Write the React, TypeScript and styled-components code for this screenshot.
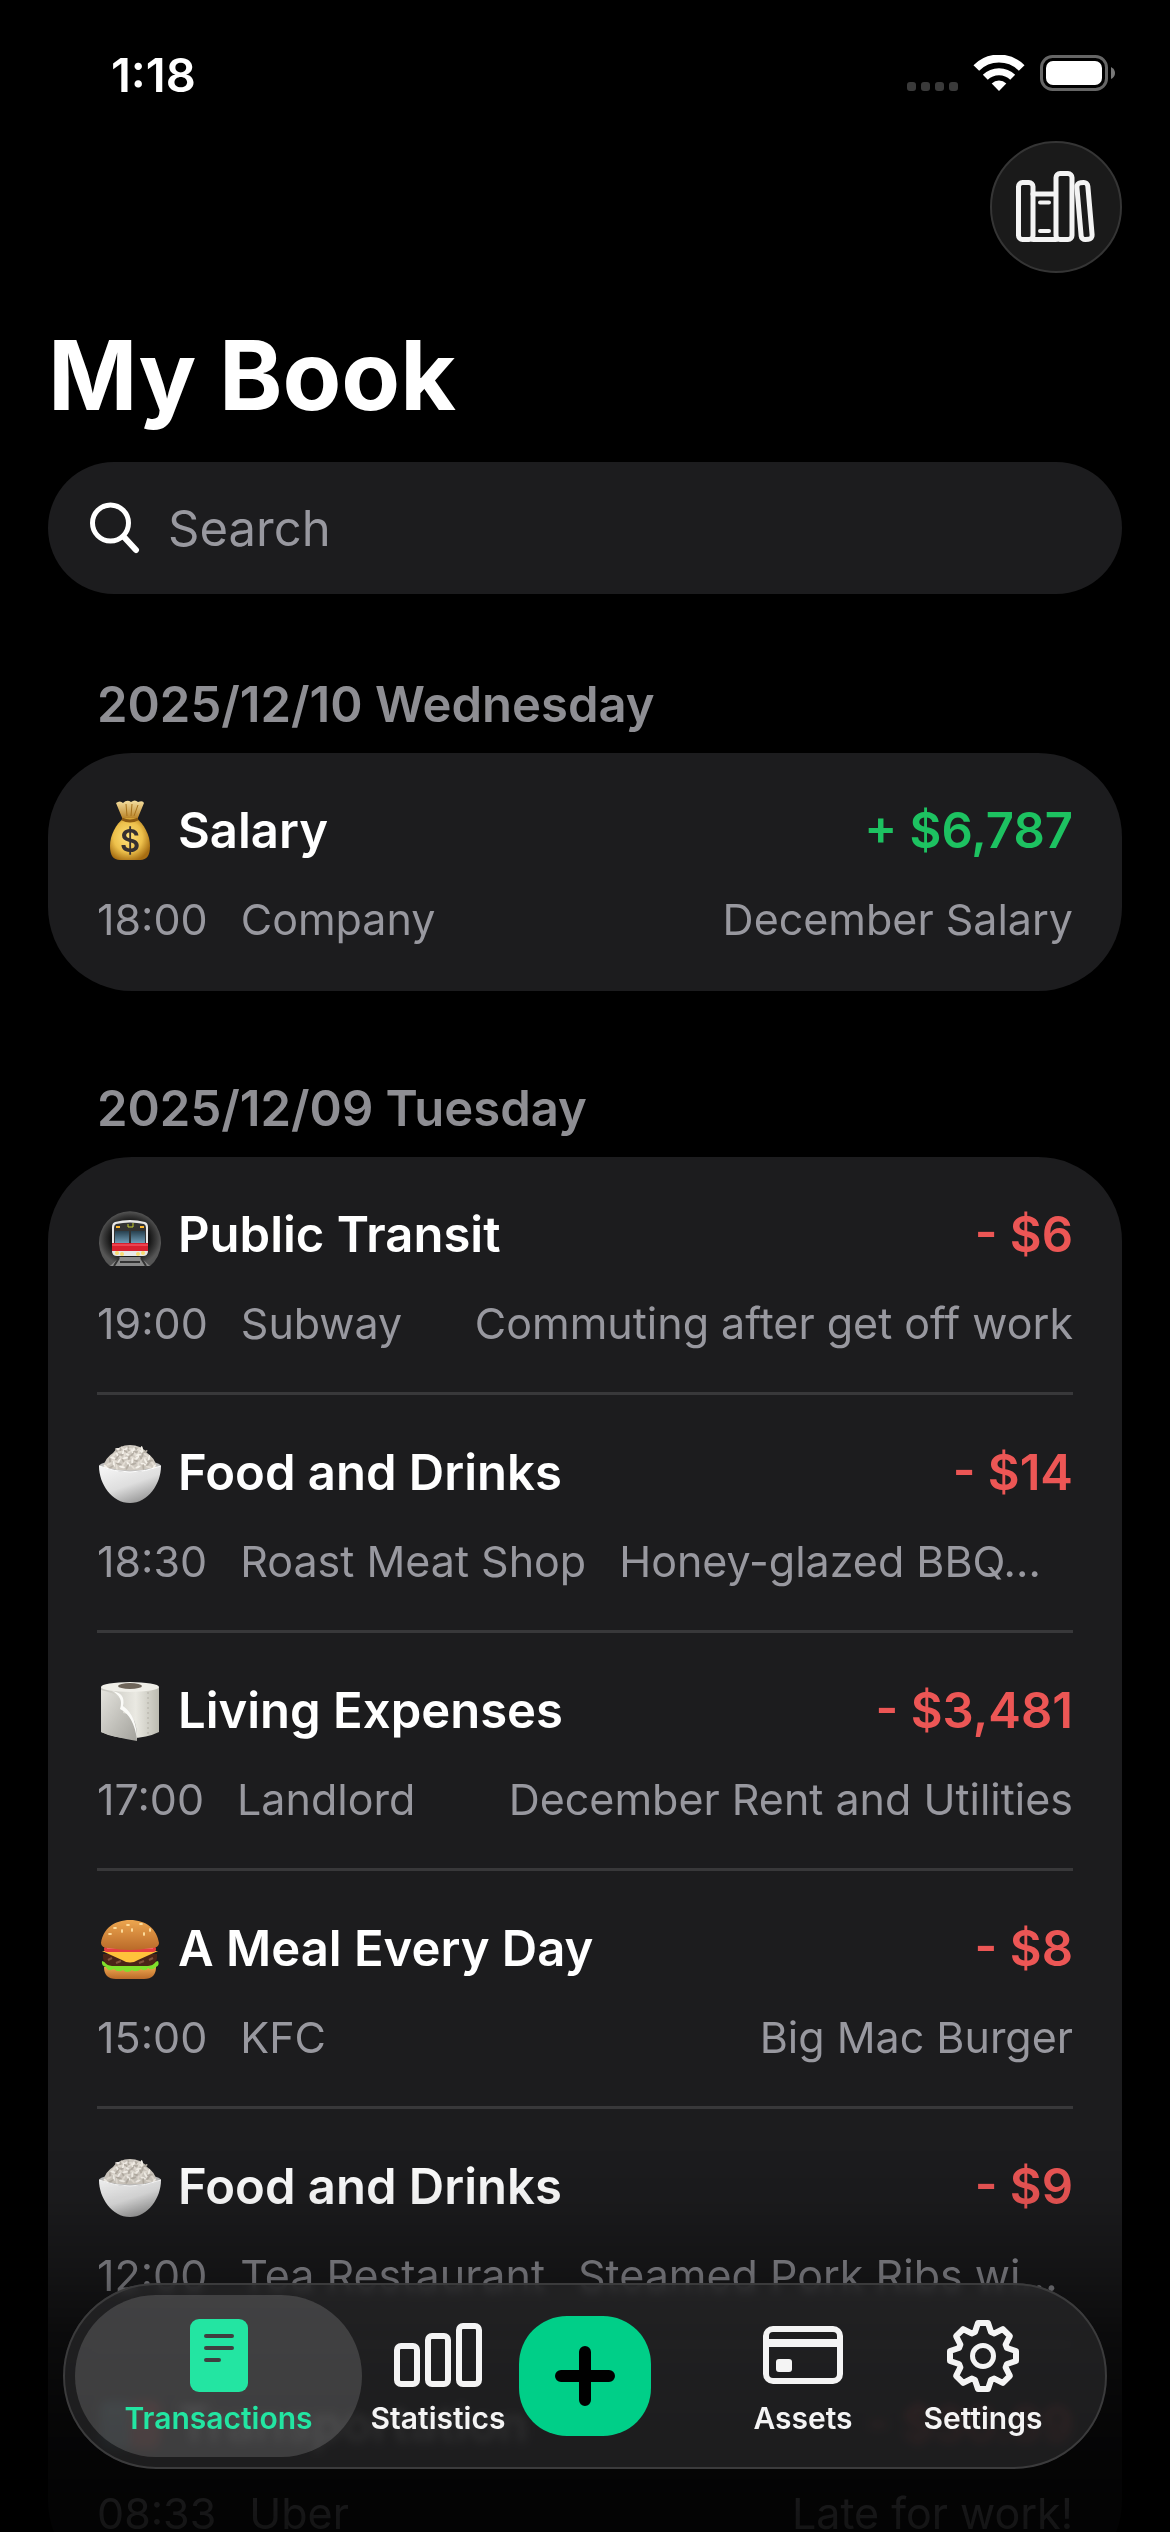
import styled, { createGlobalStyle } from "styled-components";
import { useState } from "react";

type Entry = {
  id: number;
  icon: string;
  title: string;
  amount: string;
  time: string;
  place: string;
  note: string;
  long?: boolean;
};

const days: Array<{ date: string; entries: Entry[] }> = [
  {
    date: "2025/12/10 Wednesday",
    entries: [
      {
        id: 1,
        icon: "money",
        title: "Salary",
        amount: "+ $6,787",
        time: "18:00",
        place: "Company",
        note: "December Salary",
      },
    ],
  },
  {
    date: "2025/12/09 Tuesday",
    entries: [
      {
        id: 2,
        icon: "metro",
        title: "Public Transit",
        amount: "- $6",
        time: "19:00",
        place: "Subway",
        note: "Commuting after get off work",
      },
      {
        id: 3,
        icon: "rice",
        title: "Food and Drinks",
        amount: "- $14",
        time: "18:30",
        place: "Roast Meat Shop",
        note: "Honey-glazed BBQ...",
        long: true,
      },
      {
        id: 4,
        icon: "roll",
        title: "Living Expenses",
        amount: "- $3,481",
        time: "17:00",
        place: "Landlord",
        note: "December Rent and Utilities",
      },
      {
        id: 5,
        icon: "burger",
        title: "A Meal Every Day",
        amount: "- $8",
        time: "15:00",
        place: "KFC",
        note: "Big Mac Burger",
      },
      {
        id: 6,
        icon: "rice",
        title: "Food and Drinks",
        amount: "- $9",
        time: "12:00",
        place: "Tea Restaurant",
        note: "Steamed Pork Ribs wi...",
        long: true,
      },
      {
        id: 7,
        icon: "taxi",
        title: "Transportation",
        amount: "- $30.89",
        time: "08:33",
        place: "Uber",
        note: "Late for work!",
      },
    ],
  },
];

// eight teeth around a hub
const gearPath = () => {
  const pts: string[] = [];
  for (let i = 0; i < 8; i++) {
    const a = (i * Math.PI) / 4;
    [
      [-8, -24],
      [-5, -33],
      [5, -33],
      [8, -24],
    ].forEach(([x, y]) => {
      const px = 37 + x * Math.cos(a) - y * Math.sin(a);
      const py = 37 + x * Math.sin(a) + y * Math.cos(a);
      pts.push(`${px.toFixed(1)} ${py.toFixed(1)}`);
    });
  }
  return `M${pts.join("L")}Z`;
};

const MoneyIcon = () => (
  <svg width="64" height="64" viewBox="0 0 64 64" aria-hidden="true">
    <defs>
      <radialGradient id="bag" cx="0.45" cy="0.45" r="0.6">
        <stop offset="0" stopColor="#ffe27a" />
        <stop offset="0.6" stopColor="#edc04b" />
        <stop offset="1" stopColor="#a66d12" />
      </radialGradient>
      <linearGradient id="neck" x1="0" x2="0" y1="0" y2="1">
        <stop offset="0" stopColor="#f5dfa0" />
        <stop offset="1" stopColor="#b57c1d" />
      </linearGradient>
    </defs>
    <path
      d="M18 4q4-3 7 0q4-4 8-1q4-3 7 0q5-2 6 1l-7 17H25Z"
      fill="url(#neck)"
    />
    <path d="M28 5l1 12M34 5l-1 12M40 6l-4 11" stroke="#a8731c" fill="none" />
    <path
      d="M26 19h12c8 6 14 17 14 28 0 9-3 14-10 14H22c-7 0-10-5-10-14 0-11 6-22 14-28Z"
      fill="url(#bag)"
    />
    <path d="M24 20q8 4 16 0" stroke="#8c5a12" strokeWidth="3" fill="none" />
    <text
      x="32"
      y="53"
      textAnchor="middle"
      fontFamily="Inter, sans-serif"
      fontSize="31"
      fontWeight="600"
      fill="#363031"
    >
      $
    </text>
  </svg>
);

const MetroIcon = () => (
  <svg width="64" height="64" viewBox="0 -4 64 64" aria-hidden="true">
    <defs>
      <radialGradient id="tunnel">
        <stop offset="0.5" stopColor="#000" />
        <stop offset="0.85" stopColor="#393939" />
        <stop offset="1" stopColor="#555" />
      </radialGradient>
      <linearGradient id="pane" x1="0" x2="0" y1="0" y2="1">
        <stop offset="0" stopColor="#27404f" />
        <stop offset="1" stopColor="#6f9cb6" />
      </linearGradient>
    </defs>
    <path d="M12 59a31 31 0 1 1 40 0Z" fill="url(#tunnel)" />
    <path d="M22 50h20l10 9H12Z" fill="#8b8b8b" />
    <path d="M21 51l-5 8M43 51l5 8M22 55h20" stroke="#333" strokeWidth="2" />
    <path
      d="M17 15q15-4 30 0q3 1 3 5v24q0 5-5 5H19q-5 0-5-5V20q0-4 3-5Z"
      fill="#e8e8e8"
    />
    <path d="M18 17q14-3 28 0q2 1 2 4v15H16V21q0-3 2-4Z" fill="#333" />
    <path d="M17 24h14v12H17ZM33 24h14v12H33Z" fill="url(#pane)" />
    <path d="M14 36h36v8H14Z" fill="#d8202e" />
    <path d="M14 38h36" stroke="#ff6670" />
    <path d="M18 20h4M42 20h4" stroke="#ffb82e" strokeWidth="2" />
    <path d="M30 17v3h5v-4" stroke="#c6ce2f" strokeWidth="1" fill="none" />
    <g fill="#f8dc72">
      <circle cx="19" cy="46" r="2" />
      <circle cx="24" cy="47" r="2" />
      <circle cx="40" cy="47" r="2" />
      <circle cx="45" cy="46" r="2" />
    </g>
  </svg>
);

const grains = Array.from({ length: 70 }, (_, i) => {
  const row = i % 7;
  const col = Math.floor(i / 7);
  const half = 12 + row * 2;
  const x = 32 - half + (col * half * 2) / 9 + (row % 2);
  return { x, y: 8 + row * 3, turn: (i * 67) % 180 };
});

const RiceIcon = () => (
  <svg width="64" height="64" viewBox="0 0 64 64" aria-hidden="true">
    <defs>
      <linearGradient id="bowl" x1="0.2" x2="0.8" y1="0" y2="1">
        <stop offset="0" stopColor="#f4f4f4" />
        <stop offset="0.5" stopColor="#dedede" />
        <stop offset="1" stopColor="#8c8c8c" />
      </linearGradient>
    </defs>
    <ellipse cx="32" cy="25" rx="31" ry="6" fill="#bdbdbd" />
    <path
      d="M5 26q3-10 10-14q6-8 17-8t17 8q7 4 10 14q-27 7-54 0Z"
      fill="#cfc9c0"
    />
    {grains.map((g, i) => (
      <ellipse
        key={i}
        cx={g.x}
        cy={g.y}
        rx="3"
        ry="1"
        fill={i % 3 === 0 ? "#f5f1ea" : i % 3 === 1 ? "#b5aea4" : "#e3ddd4"}
        transform={`rotate(${g.turn} ${g.x} ${g.y})`}
      />
    ))}
    <path
      d="M1 25q31 12 62 0c0 18-13 37-31 37S1 43 1 25Z"
      fill="url(#bowl)"
    />
    <path d="M1 25q31 12 62 0" stroke="#fff" strokeWidth="1" fill="none" />
  </svg>
);

const RollIcon = () => (
  <svg width="64" height="64" viewBox="0 0 64 64" aria-hidden="true">
    <defs>
      <linearGradient id="paper" x1="0" x2="1">
        <stop offset="0" stopColor="#c2c1ba" />
        <stop offset="0.6" stopColor="#eae9e2" />
        <stop offset="1" stopColor="#bcbbb1" />
      </linearGradient>
      <linearGradient id="sheet" x1="0" x2="1" y1="0" y2="1">
        <stop offset="0" stopColor="#e4e3dd" />
        <stop offset="1" stopColor="#a3a29c" />
      </linearGradient>
    </defs>
    <path d="M3 8v45q12 6 29 6t29-6V8Z" fill="url(#paper)" />
    <ellipse cx="32" cy="8" rx="29" ry="5" fill="#f0efe9" />
    <ellipse cx="32" cy="7" rx="12" ry="3" fill="#6e655a" />
    <path d="M3 11v42q12 5 36 9q1-27-14-28q4-18-22-23Z" fill="url(#sheet)" />
    <path
      d="M14 12q14 2 11 15q14 10 14 34q-3-24-17-31q4-12-8-18Z"
      fill="#fbfbf8"
    />
    <path d="M50 13v44" stroke="#b2b0a6" strokeDasharray="2 3" />
  </svg>
);

const BurgerIcon = () => (
  <svg width="64" height="64" viewBox="0 0 64 64" aria-hidden="true">
    <defs>
      <linearGradient id="bun" x1="0" x2="0" y1="0" y2="1">
        <stop offset="0" stopColor="#eda64f" />
        <stop offset="1" stopColor="#ba6a29" />
      </linearGradient>
    </defs>
    <path d="M6 50h52q0 12-12 12H18Q6 62 6 50Z" fill="url(#bun)" />
    <path
      d="M4 44q6 3 12 2h34q5 0 10-2q2 4-2 6q-4 4-8 1q-3 4-7 1q-5 4-9 1q-5 4-9 0q-5 3-9-1q-6 3-8-2q-5-1-4-6Z"
      fill="#7fe02b"
    />
    <path d="M5 37h54q1 11-9 12H14Q4 48 5 37Z" fill="#4a2417" />
    <path
      d="M10 43l4-2M18 46l5-2M41 46l5-2M51 43l4-2"
      stroke="#80503a"
      strokeWidth="2"
    />
    <path d="M4 34h56L40 43q-8 5-16 0Z" fill="#ffc23b" />
    <rect x="6" y="29" width="52" height="6" rx="3" fill="#e83d42" />
    <path d="M9 31h46" stroke="#ff8a85" />
    <path
      d="M3 26C5 12 16 3 32 3s27 9 29 23q0 5-8 5q-21 4-42 0q-8 0-8-5Z"
      fill="url(#bun)"
    />
    <g fill="#ffe2a3">
      <ellipse cx="17" cy="11" rx="2" ry="1" />
      <ellipse cx="30" cy="8" rx="2" ry="1" />
      <ellipse cx="43" cy="7" rx="2" ry="1" />
      <ellipse cx="24" cy="14" rx="1" ry="2" />
      <ellipse cx="34" cy="13" rx="1" ry="2" />
      <ellipse cx="46" cy="17" rx="1" ry="2" />
      <ellipse cx="52" cy="13" rx="1" ry="2" />
      <ellipse cx="12" cy="17" rx="2" ry="1" />
    </g>
  </svg>
);

const TaxiIcon = () => (
  <svg width="64" height="64" viewBox="0 0 64 64" aria-hidden="true">
    <rect x="2" y="8" width="34" height="48" rx="8" fill="#4b8293" />
    <rect x="32" y="8" width="30" height="48" rx="8" fill="#e53c35" />
  </svg>
);

const icons: Record<string, () => React.JSX.Element> = {
  money: MoneyIcon,
  metro: MetroIcon,
  rice: RiceIcon,
  roll: RollIcon,
  burger: BurgerIcon,
  taxi: TaxiIcon,
};

const BooksIcon = () => (
  <svg
    width="80"
    height="72"
    viewBox="0 0 80 72"
    fill="none"
    stroke="#f3f3f3"
    strokeWidth="5"
    strokeLinecap="round"
    aria-hidden="true"
  >
    <rect x="2.5" y="11.5" width="14.5" height="57" rx="4" />
    <path d="M17 23h22M17 68.5h23" />
    <path d="M24 31.5h9M24 60h9" strokeWidth="4" />
    <rect x="40" y="2.5" width="16" height="66" rx="4" />
    <rect
      x="63"
      y="11.5"
      width="11"
      height="57"
      rx="4"
      transform="rotate(-5 69 40)"
    />
  </svg>
);

const SearchIcon = () => (
  <svg
    width="50"
    height="52"
    viewBox="0 0 50 52"
    fill="none"
    stroke="#fff"
    strokeWidth="5"
    strokeLinecap="round"
    aria-hidden="true"
  >
    <circle cx="20.5" cy="21" r="18" />
    <path d="M34 35L46 48" strokeWidth="6" />
  </svg>
);

const StatusIcons = () => (
  <svg width="208" height="36" viewBox="0 0 208 36" aria-hidden="true">
    <g fill="#3a3a3a">
      <rect x="0" y="27" width="9" height="9" rx="3" />
      <rect x="14" y="27" width="9" height="9" rx="3" />
      <rect x="28" y="27" width="9" height="9" rx="3" />
      <rect x="42" y="27" width="9" height="9" rx="3" />
    </g>
    <g fill="none" stroke="#fff">
      <path d="M69.3 13a32 32 0 0 1 45.4 0" strokeWidth="8" />
      <path d="M78.3 22.3a19.5 19.5 0 0 1 27.4 0" strokeWidth="7" />
    </g>
    <path d="M92 36l-7.3-7.5a10.5 10.5 0 0 1 14.6 0Z" fill="#fff" />
    <rect
      x="134.5"
      y="1.5"
      width="65"
      height="33"
      rx="11"
      fill="none"
      stroke="#666"
      strokeWidth="3"
    />
    <rect x="139" y="6" width="56" height="24" rx="7" fill="#fff" />
    <path d="M204 12q4 2 4 6t-4 6Z" fill="#777" />
  </svg>
);

const NoteIcon = () => (
  <svg width="94" height="74" viewBox="0 0 94 74" aria-hidden="true">
    <rect x="18" y="0" width="58" height="73" rx="9" fill="#23e5a2" />
    <path
      d="M34 17h26M34 29h26M34 41h13"
      stroke="#3f3f3f"
      strokeWidth="4"
      strokeLinecap="round"
    />
  </svg>
);

const ChartIcon = () => (
  <svg
    width="94"
    height="74"
    viewBox="0 0 94 74"
    fill="none"
    stroke="#f4f4f4"
    strokeWidth="6"
    aria-hidden="true"
  >
    <rect x="6" y="27" width="20" height="38" rx="4" />
    <rect x="37" y="17" width="20" height="48" rx="4" />
    <rect x="68" y="7" width="20" height="58" rx="4" />
  </svg>
);

const CardIcon = () => (
  <svg
    width="94"
    height="74"
    viewBox="0 0 94 74"
    fill="none"
    stroke="#f4f4f4"
    strokeWidth="6"
    aria-hidden="true"
  >
    <rect x="10" y="10" width="74" height="52" rx="7" />
    <path d="M9 24h76" strokeWidth="8" />
    <rect
      x="20"
      y="40"
      width="16"
      height="13"
      rx="3"
      fill="#f4f4f4"
      stroke="none"
    />
  </svg>
);

const GearIcon = () => (
  <svg
    width="74"
    height="74"
    viewBox="0 0 74 74"
    fill="none"
    stroke="#f4f4f4"
    strokeWidth="5"
    strokeLinejoin="round"
    aria-hidden="true"
  >
    <path d={gearPath()} strokeWidth="6" />
    <circle cx="37" cy="37" r="10.5" />
  </svg>
);

const App = () => {
  const [tab, setTab] = useState("Transactions");

  return (
    <Screen>
      <GlobalStyle />
      <StatusBar>
        <Clock>1:18</Clock>
        <StatusIcons />
      </StatusBar>
      <Toolbar>
        <RoundButton type="button" aria-label="Books">
          <BooksIcon />
        </RoundButton>
      </Toolbar>
      <Heading>My Book</Heading>
      <SearchBox>
        <SearchIcon />
        <SearchInput type="search" placeholder="Search" aria-label="Search" />
      </SearchBox>
      <Feed>
        {days.map((day) => (
          <Day key={day.date}>
            <DayTitle>{day.date}</DayTitle>
            <Card>
              {day.entries.map((el) => {
                const Icon = icons[el.icon];
                return (
                  <Row key={el.id}>
                    <Line>
                      <Icon />
                      <Title>{el.title}</Title>
                      <Amount $income={el.amount.startsWith("+")}>
                        {el.amount}
                      </Amount>
                    </Line>
                    <Details>
                      <span>{el.time}</span>
                      <span>{el.place}</span>
                      <Note $long={el.long}>{el.note}</Note>
                    </Details>
                  </Row>
                );
              })}
            </Card>
          </Day>
        ))}
      </Feed>
      <Fade />
      <TabBar>
        <Tab
          type="button"
          $active={tab === "Transactions"}
          onClick={() => setTab("Transactions")}
        >
          <NoteIcon />
          Transactions
        </Tab>
        <Tab
          type="button"
          $active={tab === "Statistics"}
          onClick={() => setTab("Statistics")}
        >
          <ChartIcon />
          Statistics
        </Tab>
        <AddButton type="button" aria-label="Add">
          <svg width="60" height="60" viewBox="0 0 60 60" aria-hidden="true">
            <path
              d="M30 6v48M6 30h48"
              stroke="#000"
              strokeWidth="12"
              strokeLinecap="round"
            />
          </svg>
        </AddButton>
        <span />
        <Tab
          type="button"
          $active={tab === "Assets"}
          onClick={() => setTab("Assets")}
        >
          <CardIcon />
          Assets
        </Tab>
        <Tab
          type="button"
          $active={tab === "Settings"}
          onClick={() => setTab("Settings")}
        >
          <GearIcon />
          Settings
        </Tab>
      </TabBar>
    </Screen>
  );
};

export default App;

const GlobalStyle = createGlobalStyle`
  * {
    box-sizing: border-box;
  }

  body {
    margin: 0;
    background: #000;
    color: #fff;
    font-family: Inter, "Liberation Sans", sans-serif;
  }

  button, input {
    font: inherit;
    border: none;
  }
`;

const Screen = styled.main`
  height: 100vh;
  padding: 0 48px;
  overflow: hidden;
`;

const StatusBar = styled.div`
  height: 141px;
  padding: 45px 7px 0 63px;
  display: flex;
  justify-content: space-between;
  align-items: flex-start;

  svg {
    margin-top: 10px;
  }
`;

const Clock = styled.div`
  font-size: 47px;
  line-height: 60px;
  font-weight: 600;
`;

const Toolbar = styled.div`
  display: flex;
  justify-content: flex-end;
`;

const RoundButton = styled.button`
  width: 132px;
  height: 132px;
  padding: 0;
  border: 2px solid #353535;
  border-radius: 50%;
  background: #1a1a1a;
  display: flex;
  justify-content: center;
  align-items: center;
`;

const Heading = styled.h1`
  margin: 42px 0 27px;
  font-size: 96px;
  line-height: 120px;
  font-weight: 700;
`;

const SearchBox = styled.div`
  height: 132px;
  padding: 0 42px;
  border-radius: 66px;
  background: #1c1c1e;
  display: flex;
  align-items: center;
  gap: 28px;
`;

const SearchInput = styled.input`
  flex: 1;
  min-width: 0;
  padding: 2px 0 0;
  background: none;
  color: #fff;
  font-size: 49px;
  line-height: 60px;
  outline: none;

  &::placeholder {
    color: #98989f;
    opacity: 1;
  }
`;

const Feed = styled.div`
  display: flex;
  flex-direction: column;
  gap: 7px;
`;

const Day = styled.section`
  padding-top: 81px;
`;

const DayTitle = styled.h2`
  margin: 0 0 18px;
  padding: 0 49px;
  color: #8e8e93;
  font-size: 49px;
  line-height: 60px;
  font-weight: 600;
`;

const Card = styled.ul`
  margin: 0;
  padding: 0 49px;
  list-style: none;
  border-radius: 84px;
  background: #1c1c1e;
`;

const Row = styled.li`
  padding: 48px 0 42px;
  border-bottom: 3px solid #38383a;

  &:last-child {
    border-color: transparent;
  }
`;

const Line = styled.div`
  height: 60px;
  padding-left: 1px;
  display: flex;
  align-items: center;
  gap: 16px;
  font-size: 49px;
  line-height: 60px;
  font-weight: 600;
`;

const Title = styled.span`
  flex: 1;
`;

const Amount = styled.span<{ $income: boolean }>`
  color: ${({ $income }) => ($income ? "#1dc261" : "#ec5655")};
`;

const Details = styled.div`
  margin-top: 31px;
  display: flex;
  gap: 33px;
  color: #98989f;
  font-size: 43px;
  line-height: 54px;
  white-space: nowrap;
`;

const Note = styled.span<{ $long?: boolean }>`
  margin-left: ${({ $long }) => ($long ? "0" : "auto")};
`;

const Fade = styled.div`
  position: fixed;
  left: 0;
  right: 0;
  bottom: 0;
  height: 382px;
  background: linear-gradient(
    rgba(0, 0, 0, 0),
    rgba(0, 0, 0, 0.07) 14%,
    rgba(0, 0, 0, 0.3) 32%,
    rgba(0, 0, 0, 0.58) 48%,
    rgba(0, 0, 0, 0.78) 72%,
    rgba(0, 0, 0, 0.87) 100%
  );
  pointer-events: none;
`;

const TabBar = styled.nav`
  position: fixed;
  left: 63px;
  right: 63px;
  bottom: 63px;
  height: 186px;
  padding: 10px;
  border: 2px solid #3b3b3c;
  border-radius: 93px;
  background: rgba(33, 33, 34, 0.84);
  backdrop-filter: blur(5px) brightness(2);
  display: grid;
  grid-template-columns: 287fr 152fr 142fr 57fr 180fr 180fr 22fr;
  align-items: center;
`;

const Tab = styled.button<{ $active: boolean }>`
  height: 162px;
  padding: 24px 0 0;
  border-radius: 81px;
  background: ${({ $active }) =>
    $active ? "rgba(255, 255, 255, 0.15)" : "transparent"};
  color: ${({ $active }) => ($active ? "#23e5a2" : "#f4f4f4")};
  display: flex;
  align-items: center;
  flex-direction: column;
  gap: 7px;
  font-size: 30px;
  line-height: 36px;
  font-weight: 600;
`;

const AddButton = styled.button`
  width: 132px;
  height: 120px;
  padding: 0;
  border-radius: 48px;
  background: #00cf88;
  justify-self: center;
  display: flex;
  justify-content: center;
  align-items: center;
`;
